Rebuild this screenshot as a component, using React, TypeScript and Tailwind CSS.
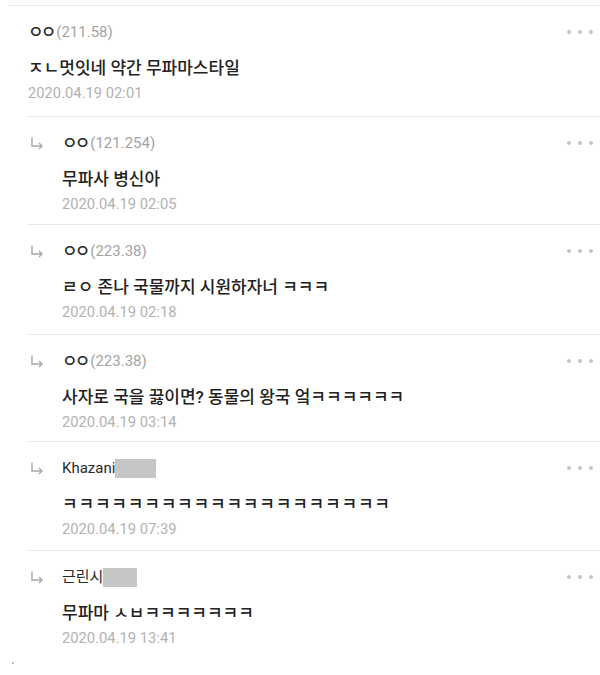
import React from "react";

const FONT = { fontFamily: "Roboto, 'Noto Sans CJK KR', sans-serif" };

function Dots() {
  return (
    <div className="flex items-center gap-[7px] pr-[7px]">
      <span className="w-[4px] h-[4px] rounded-full bg-[#c4c4c4]" />
      <span className="w-[4px] h-[4px] rounded-full bg-[#c4c4c4]" />
      <span className="w-[4px] h-[4px] rounded-full bg-[#c4c4c4]" />
    </div>
  );
}

function Arrow() {
  return (
    <svg width="14" height="14" viewBox="0 0 14 14" className="shrink-0">
      <path d="M2 1.5 V10 H12" fill="none" stroke="#a8a8a8" strokeWidth="1.4" />
      <path d="M9 7 L12 10 L9 13" fill="none" stroke="#a8a8a8" strokeWidth="1.4" />
    </svg>
  );
}

type C = { name: string; ip?: string; blur?: number; text: string; date: string; h: number; wide?: boolean };

const replies: C[] = [
  { name: "ㅇㅇ", ip: "(121.254)", text: "무파사 병신아", date: "2020.04.19 02:05", h: 108 },
  { name: "ㅇㅇ", ip: "(223.38)", text: "ㄹㅇ 존나 국물까지 시원하자너 ㅋㅋㅋ", date: "2020.04.19 02:18", h: 110 },
  { name: "ㅇㅇ", ip: "(223.38)", text: "사자로 국을 끓이면? 동물의 왕국 엌ㅋㅋㅋㅋㅋㅋ", date: "2020.04.19 03:14", h: 107 },
  { name: "Khazani", blur: 41, text: "ㅋㅋㅋㅋㅋㅋㅋㅋㅋㅋㅋㅋㅋㅋㅋㅋㅋㅋㅋㅋ", date: "2020.04.19 07:39", h: 109, wide: true },
  { name: "근린시", blur: 34, text: "무파마 ㅅㅂㅋㅋㅋㅋㅋㅋㅋ", date: "2020.04.19 13:41", h: 110 },
];

function Name({ c }: { c: C }) {
  return (
    <div className="flex items-center text-[15px] leading-[20px]">
      {c.name === "ㅇㅇ" ? (
        <span className="text-[#2a2a2a] text-[17px] font-medium tracking-[-3px] mr-[3px]">{c.name}</span>
      ) : (
        <span className="text-[#2a2a2a]">{c.name}</span>
      )}
      {c.ip && <span className="text-[#a3a3a3]">{c.ip}</span>}
      {c.blur && <span className="h-[19px] bg-[#c6c6c6]" style={{ width: c.blur }} />}
    </div>
  );
}

function Body({ c }: { c: C }) {
  return (
    <>
      <div
        className={
          c.wide
            ? "mt-[14px] text-[17px] leading-[24px] font-medium text-[#222] tracking-[0.8px]"
            : "mt-[14px] text-[17px] leading-[24px] font-medium text-[#222]"
        }
      >
        {c.text}
      </div>
      <div className="mt-[3px] text-[14.75px] leading-[20px] text-[#b2b2b2]">{c.date}</div>
    </>
  );
}

export default function App() {
  return (
    <div className="w-[600px] h-[675px] bg-white overflow-hidden relative" style={FONT}>
      <div className="h-[5px]" />
      <div className="ml-[8px] border-t border-[#e9e9e9]" />
      <div className="ml-[27px] h-[110px] pt-[16px]">
        <div className="flex items-center justify-between pl-[1px]">
          <Name c={{ name: "ㅇㅇ", ip: "(211.58)", text: "", date: "", h: 0 }} />
          <Dots />
        </div>
        <div className="pl-[1px]">
          <Body c={{ name: "", text: "ㅈㄴ멋잇네 약간 무파마스타일", date: "2020.04.19 02:01", h: 0 }} />
        </div>
      </div>
      {replies.map((c, i) => (
        <div key={i} className="ml-[27px] border-t border-[#e9e9e9] pt-[16px]" style={{ height: c.h }}>
          <div className="flex items-center justify-between">
            <div className="flex items-center">
              <div className="w-[35px] pl-[3px]">
                <Arrow />
              </div>
              <Name c={c} />
            </div>
            <Dots />
          </div>
          <div className="pl-[35px]">
            <Body c={c} />
          </div>
        </div>
      ))}
      <span className="absolute left-[12px] top-[662px] w-[2px] h-[2px] bg-[#bdbdbd]" />
    </div>
  );
}
